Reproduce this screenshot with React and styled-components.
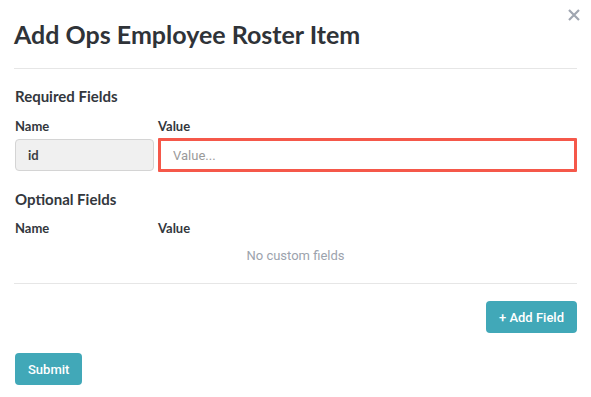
import React from "react";
import styled, { createGlobalStyle } from "styled-components";

const Global = createGlobalStyle`
  html, body { margin: 0; padding: 0; background: #fff; }
  body { font-family: Lato, "Open Sans", sans-serif; color: #33373d; }
  * { box-sizing: border-box; }
`;

const Modal = styled.div`
  position: relative;
  width: 591px;
  height: 397px;
  padding: 0 14px;
  display: flex;
  flex-direction: column;
`;

const Close = styled.button`
  position: absolute;
  top: 8px;
  right: 10px;
  width: 14px;
  height: 14px;
  padding: 0;
  border: none;
  background: none;
  display: flex;
  align-items: center;
  justify-content: center;
  cursor: pointer;
`;

const Title = styled.h1`
  margin: 0;
  padding: 20px 0 20px;
  font-family: Lato, sans-serif;
  font-weight: 700;
  font-size: 25px;
  line-height: 28px;
  color: #2f3338;
  border-bottom: 1px solid #e6e6e6;
`;

const SectionTitle = styled.h2`
  margin: ${(p) => p.$top}px 0 0 1px;
  font-family: Lato, sans-serif;
  font-weight: 700;
  font-size: 15px;
  line-height: 18px;
  color: #33373d;
`;

const Grid = styled.div`
  display: grid;
  grid-template-columns: 139px 1fr;
  column-gap: 4px;
  margin-top: ${(p) => p.$top}px;
  padding-left: 1px;
`;

const Label = styled.div`
  font-family: Lato, sans-serif;
  font-weight: 700;
  font-size: 13px;
  line-height: 16px;
  color: #33373d;
`;

const NameBox = styled.div`
  height: 32px;
  margin-top: 5px;
  background: #f0f0f0;
  border: 1px solid #d4d4d4;
  border-radius: 4px;
  padding: 0 12px;
  display: flex;
  align-items: center;
  font-family: Lato, sans-serif;
  font-weight: 700;
  font-size: 13px;
  color: #3a3e44;
`;

const ValueInput = styled.input`
  height: 34px;
  margin-top: 4px;
  width: 419px;
  border: 3px solid #f5584a;
  border-radius: 1px;
  padding: 0 12px;
  font-family: Roboto, sans-serif;
  font-size: 13px;
  color: #333;
  outline: none;
  &::placeholder { color: #9a9a9a; }
`;

const Empty = styled.div`
  text-align: center;
  margin-top: 12px;
  font-family: Roboto, sans-serif;
  font-size: 13px;
  line-height: 16px;
  color: #9ca3ad;
`;

const Divider = styled.hr`
  margin: ${(p) => p.$top}px 0 0;
  border: none;
  border-top: 1px solid #e6e6e6;
`;

const Row = styled.div`
  display: flex;
  justify-content: ${(p) => p.$justify};
  margin-top: ${(p) => p.$top}px;
  padding-left: ${(p) => p.$left || 0}px;
`;

const Button = styled.button`
  height: 32px;
  padding: 0 13px;
  border: none;
  border-radius: 4px;
  background: #41a8b8;
  color: #fff;
  font-family: Roboto, sans-serif;
  font-weight: 500;
  font-size: 13px;
  cursor: pointer;
`;

export default function App() {
  return (
    <>
      <Global />
      <Modal>
        <Close aria-label="Close">
          <svg width="12" height="12" viewBox="0 0 12 12">
            <path d="M1 1 L11 11 M11 1 L1 11" stroke="#a0a6b1" strokeWidth="2.2" strokeLinecap="butt" />
          </svg>
        </Close>
        <Title>Add Ops Employee Roster Item</Title>

        <SectionTitle $top={18}>Required Fields</SectionTitle>
        <Grid $top={13}>
          <Label>Name</Label>
          <Label>Value</Label>
          <NameBox>id</NameBox>
          <ValueInput placeholder="Value..." />
        </Grid>

        <SectionTitle $top={18}>Optional Fields</SectionTitle>
        <Grid $top={12}>
          <Label>Name</Label>
          <Label>Value</Label>
        </Grid>
        <Empty>No custom fields</Empty>

        <Divider $top={19} />

        <Row $justify="flex-end" $top={17}>
          <Button>+ Add Field</Button>
        </Row>
        <Row $justify="flex-start" $top={20} $left={1}>
          <Button>Submit</Button>
        </Row>
      </Modal>
    </>
  );
}
